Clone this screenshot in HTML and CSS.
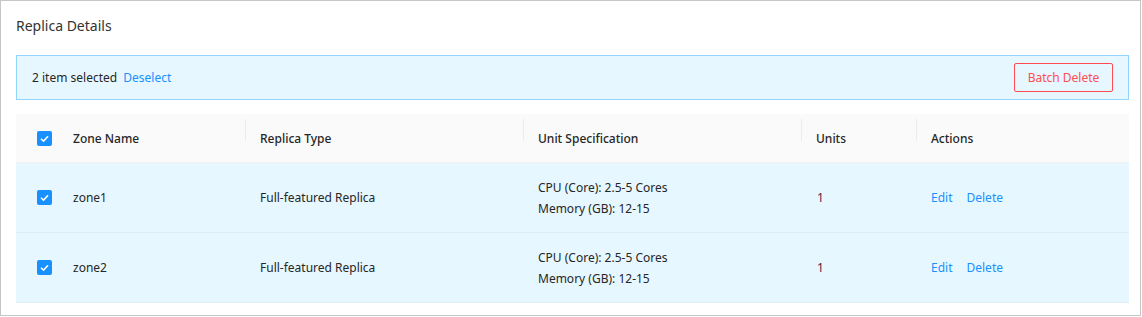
FILE: index.html
```html
<!DOCTYPE html>
<html>
<head>
<meta charset="utf-8">
<link rel="stylesheet" href="styles.css">
</head>
<body>
<div class="panel">
  <div class="title">Replica Details</div>
  <div class="alert">
    <div class="alert-text">2 item selected <a class="link deselect">Deselect</a></div>
    <button class="btn-danger">Batch Delete</button>
  </div>
  <div class="table">
    <div class="row head">
      <div class="cell check"><span class="cb"><svg viewBox="0 0 16 16" width="16" height="16"><path d="M4.2 8.2 L7 10.8 L11.8 5.6" fill="none" stroke="#fff" stroke-width="1.6"/></svg></span></div>
      <div class="cell">Zone Name</div>
      <div class="cell sep">Replica Type</div>
      <div class="cell sep">Unit Specification</div>
      <div class="cell sep">Units</div>
      <div class="cell sep">Actions</div>
    </div>
    <div class="row body">
      <div class="cell check"><span class="cb"><svg viewBox="0 0 16 16" width="16" height="16"><path d="M4.2 8.2 L7 10.8 L11.8 5.6" fill="none" stroke="#fff" stroke-width="1.6"/></svg></span></div>
      <div class="cell">zone1</div>
      <div class="cell">Full-featured Replica</div>
      <div class="cell spec"><div>CPU (Core): 2.5-5 Cores</div><div>Memory (GB): 12-15</div></div>
      <div class="cell units">1</div>
      <div class="cell actions"><a class="link">Edit</a><a class="link">Delete</a></div>
    </div>
    <div class="row body">
      <div class="cell check"><span class="cb"><svg viewBox="0 0 16 16" width="16" height="16"><path d="M4.2 8.2 L7 10.8 L11.8 5.6" fill="none" stroke="#fff" stroke-width="1.6"/></svg></span></div>
      <div class="cell">zone2</div>
      <div class="cell">Full-featured Replica</div>
      <div class="cell spec"><div>CPU (Core): 2.5-5 Cores</div><div>Memory (GB): 12-15</div></div>
      <div class="cell units">1</div>
      <div class="cell actions"><a class="link">Edit</a><a class="link">Delete</a></div>
    </div>
  </div>
</div>
</body>
</html>
```
FILE: styles.css
```css
html, body {
  margin: 0;
  padding: 0;
  background: #fff;
}
body {
  font-family: "Noto Sans", "Open Sans", sans-serif;
  font-size: 12px;
  color: #262626;
}
.panel {
  box-sizing: border-box;
  width: 1141px;
  height: 316px;
  border: 1px solid #c6c6c6;
  padding: 0 11px 0 15px;
}
.title {
  height: 54px;
  line-height: 50px;
  font-size: 14px;
  color: #333;
}
.alert {
  box-sizing: border-box;
  height: 45px;
  border: 1px solid #91d5ff;
  background: #e6f7ff;
  display: flex;
  align-items: center;
  justify-content: space-between;
  padding: 0 15px;
}
.alert-text {
  color: #262626;
}
.link {
  color: #1890ff;
  cursor: pointer;
}
.deselect {
  margin-left: 3px;
}
.btn-danger {
  box-sizing: border-box;
  height: 29px;
  width: 99px;
  border: 1px solid #ff4d4f;
  border-radius: 2px;
  background: transparent;
  color: #ff4d4f;
  font-family: inherit;
  font-size: 12px;
  padding: 0;
}
.table {
  margin-top: 14px;
}
.row {
  box-sizing: border-box;
  display: grid;
  grid-template-columns: 42px 187px 278px 278px 115px 212px;
  align-items: center;
  border-bottom: 1px solid #e8e8e8;
}
.row.head {
  height: 49px;
  background: #fafafa;
  font-weight: 500;
  border-bottom-color: #f0f0f0;
}
.row.body {
  height: 70px;
  background: #e6f7ff;
  border-bottom-color: #dcecf5;
}
.cell {
  padding: 0 15px;
  position: relative;
}
.cell.check {
  padding: 0 0 0 21px;
  display: flex;
  align-items: center;
}
.row.head .cell.sep::before {
  content: "";
  position: absolute;
  left: 0;
  top: -11px;
  width: 1px;
  height: 22px;
  background: #ececec;
}
.cb {
  display: block;
  width: 15px;
  height: 15px;
  border-radius: 2px;
  background: #1890ff;
  overflow: hidden;
}
.cb svg {
  display: block;
  width: 15px;
  height: 15px;
}
.spec {
  line-height: 21px;
}
.units {
  padding-left: 16px;
  color: #5a1e3c;
}
.actions .link + .link {
  margin-left: 14px;
}
```
